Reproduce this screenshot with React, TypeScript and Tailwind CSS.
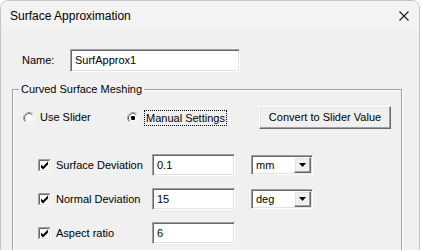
import React from 'react'

const ui = { fontFamily: '"Liberation Sans", Arial, sans-serif' }

function Radio({ checked }: { checked?: boolean }) {
  return (
    <svg width="12" height="12" viewBox="0 0 12 12" className="shrink-0">
      <circle cx="6" cy="6" r="5.5" fill="#fff" />
      <path d="M2.11 9.89 A5.5 5.5 0 0 1 9.89 2.11" fill="none" stroke="#a0a0a0" />
      <path d="M9.89 2.11 A5.5 5.5 0 0 1 2.11 9.89" fill="none" stroke="#fff" />
      <path d="M2.82 9.18 A4.5 4.5 0 0 1 9.18 2.82" fill="none" stroke="#696969" />
      <path d="M9.18 2.82 A4.5 4.5 0 0 1 2.82 9.18" fill="none" stroke="#e3e3e3" />
      {checked && <rect x="4" y="4" width="4" height="4" rx="1" fill="#000" />}
    </svg>
  )
}

function Check() {
  return (
    <svg width="13" height="13" viewBox="0 0 13 13" className="shrink-0">
      <rect x="0" y="0" width="13" height="13" fill="#fff" />
      <path d="M0.5 12.5 V0.5 H12.5" fill="none" stroke="#a0a0a0" />
      <path d="M0.5 12.5 H12.5 V0.5" fill="none" stroke="#fff" />
      <path d="M1.5 11.5 V1.5 H11.5" fill="none" stroke="#696969" />
      <path d="M1.5 11.5 H11.5 V1.5" fill="none" stroke="#e3e3e3" />
      <path d="M3 5 L5 7 L10 2 L10 5 L5 10 L3 8 Z" fill="#000" transform="translate(0 0.5)" />
    </svg>
  )
}

const sunken =
  'bg-white border border-t-[#a0a0a0] border-l-[#a0a0a0] border-b-white border-r-white shadow-[inset_1px_1px_0_#696969,inset_-1px_-1px_0_#e3e3e3]'
const raised =
  'bg-[#f0f0f0] border border-t-white border-l-white border-b-[#696969] border-r-[#696969] shadow-[inset_-1px_-1px_0_#a0a0a0,inset_1px_1px_0_#e3e3e3]'

function Dropdown({ value }: { value: string }) {
  return (
    <div className={`${sunken} w-[62px] h-[20px] flex items-center pl-[4px] pr-[1px]`}>
      <span className="flex-1 text-[11px] leading-none text-black">{value}</span>
      <div className={`${raised} w-[17px] h-[16px] flex items-center justify-center`}>
        <svg width="7" height="4" viewBox="0 0 7 4">
          <path d="M0 0 H7 L3.5 4 Z" fill="#000" />
        </svg>
      </div>
    </div>
  )
}

const ROWS = [
  { label: 'Surface Deviation', value: '0.1', unit: 'mm' },
  { label: 'Normal Deviation', value: '15', unit: 'deg' },
  { label: 'Aspect ratio', value: '6' },
]

export default function App() {
  return (
    <div className="w-[421px] h-[250px] bg-white overflow-hidden" style={ui}>
      <div className="w-[420px] h-[270px] rounded-t-[8px] border border-[#c6c6c6] bg-[#f0f0f0] overflow-hidden">
        {/* Title bar */}
        <div className="h-[30px] bg-[#f3f3f3] flex items-center justify-between pl-[9px] pr-[9px]">
          <span className="text-[12px] text-black">Surface Approximation</span>
          <svg width="10" height="10" viewBox="0 0 10 10" className="mr-[1px]">
            <path d="M0.5 0.5 L9.5 9.5 M9.5 0.5 L0.5 9.5" stroke="#1a1a1a" strokeWidth="1.1" />
          </svg>
        </div>

        <div className="text-[11px] text-black">
          {/* Name */}
          <div className="flex items-center pt-[18px] pl-[21px]">
            <span className="w-[48px]">Name:</span>
            <div className={`${sunken} w-[170px] h-[23px] flex items-center px-[4px]`}>SurfApprox1</div>
          </div>

          {/* Group */}
          <fieldset className="ml-[11px] mt-[11px] w-[390px] h-[200px] border border-[#a0a0a0] shadow-[inset_1px_1px_0_#fff,1px_1px_0_#fff]">
            <legend className="ml-[6px] px-[2px] leading-[13px]">Curved Surface Meshing</legend>

            <div className="flex items-center pl-[10px] pr-[10px] mt-[10px]">
              <label className="w-[104px] flex items-center gap-[5px]">
                <Radio />
                <span>Use Slider</span>
              </label>
              <label className="flex items-center gap-[5px]">
                <Radio checked />
                <span className="border border-dotted border-black px-[1px] leading-[14px]">Manual Settings</span>
              </label>
              <button className={`${raised} ml-auto w-[132px] h-[23px] text-[11px] text-black`}>
                Convert to Slider Value
              </button>
            </div>

            <div className="flex flex-col gap-[12px] mt-[25px] pl-[25px]">
              {ROWS.map(r => (
                <div key={r.label} className="flex items-center h-[22px]">
                  <div className="w-[114px] flex items-center gap-[5px]">
                    <Check />
                    <span>{r.label}</span>
                  </div>
                  <div className={`${sunken} w-[83px] h-[22px] flex items-center px-[4px]`}>{r.value}</div>
                  {r.unit && (
                    <div className="ml-[16px]">
                      <Dropdown value={r.unit} />
                    </div>
                  )}
                </div>
              ))}
            </div>
          </fieldset>
        </div>
      </div>
    </div>
  )
}
